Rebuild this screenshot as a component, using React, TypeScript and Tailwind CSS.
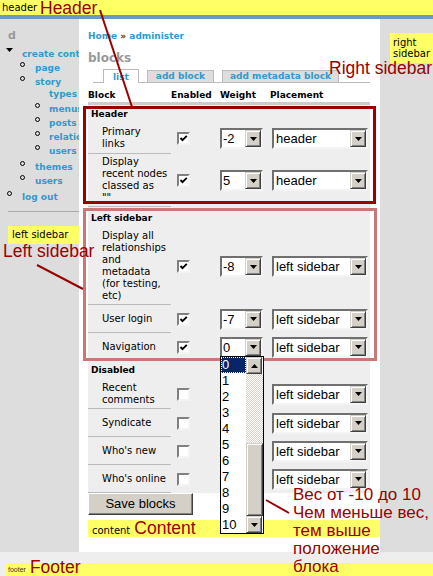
import React from 'react';

const winFont = "font-['Liberation_Sans',Arial,sans-serif]";

type Row =
    | { kind: 'section'; label: string; h: string }
    | { kind: 'block'; lines: string[]; h: string; on: boolean; weight?: string; region: string };

// disabled blocks have no weight shown: the open weight list covers that column
const rows: Row[] = [
    { kind: 'section', label: 'Header', h: 'h-[18px]' },
    { kind: 'block', lines: ['Primary', 'links'], h: 'h-[31px]', on: true, weight: '-2', region: 'header' },
    { kind: 'block', lines: ['Display', 'recent nodes', 'classed as', '""'], h: 'h-[53px]', on: true, weight: '5', region: 'header' },
    { kind: 'section', label: 'Left sidebar', h: 'h-[21px]' },
    {
        kind: 'block',
        lines: ['Display all', 'relationships', 'and', 'metadata', '(for testing,', 'etc)'],
        h: 'h-[77px]', on: true, weight: '-8', region: 'left sidebar',
    },
    { kind: 'block', lines: ['User login'], h: 'h-[28px]', on: true, weight: '-7', region: 'left sidebar' },
    { kind: 'block', lines: ['Navigation'], h: 'h-[28px]', on: true, weight: '0', region: 'left sidebar' },
    { kind: 'section', label: 'Disabled', h: 'h-[18px]' },
    { kind: 'block', lines: ['Recent', 'comments'], h: 'h-[30px]', on: false, region: 'left sidebar' },
    { kind: 'block', lines: ['Syndicate'], h: 'h-[28px]', on: false, region: 'left sidebar' },
    { kind: 'block', lines: ["Who's new"], h: 'h-[28px]', on: false, region: 'left sidebar' },
    { kind: 'block', lines: ["Who's online"], h: 'h-[28px]', on: false, region: 'left sidebar' },
];

function ArrowButton({ up = false }: { up?: boolean }) {
    return (
        <span className="w-[16px] h-[17px] shrink-0 flex items-center justify-center bg-[#d4d0c8] border border-t-[#d4d0c8] border-l-[#d4d0c8] border-r-[#404040] border-b-[#404040] shadow-[inset_1px_1px_#ffffff,inset_-1px_-1px_#808080]">
            <svg width="7" height="4" viewBox="0 0 7 4" aria-hidden="true">
                <path d={up ? 'M3.5 0L7 4H0z' : 'M0 0h7L3.5 4z'} fill="#000" />
            </svg>
        </span>
    );
}

function Select({ value, wide }: { value: string; wide?: boolean }) {
    return (
        <div
            className={`${wide ? 'w-[96px] pl-[2px]' : 'w-[43px] pl-[1px]'} h-[21px] flex bg-white border-2 border-t-[#707070] border-l-[#707070] border-b-[#f4f4f4] border-r-[#f4f4f4] ${winFont}`}
        >
            <span className="flex-1 h-[17px] overflow-hidden whitespace-nowrap text-[13px] leading-[18px] text-black">{value}</span>
            <ArrowButton />
        </div>
    );
}

function Checkbox({ on }: { on: boolean }) {
    return (
        <span className="w-[13px] h-[13px] flex items-center justify-center bg-white border-2 border-t-[#808080] border-l-[#808080] border-b-[#f4f4f4] border-r-[#f4f4f4]">
            {on && (
                <svg width="9" height="9" viewBox="0 0 9 9" aria-hidden="true">
                    <path d="M1.5 4l2 2.2L7.8 1.8" stroke="#000" strokeWidth="1.9" fill="none" />
                </svg>
            )}
        </span>
    );
}

function NavItem({ text, pad, bullet, extra = '' }: { text: string; pad: string; bullet?: string; extra?: string }) {
    return (
        <li className={`relative ${pad} ${extra}`}>
            {bullet && <span className={`absolute top-[1px] ${bullet} w-[5px] h-[5px] rounded-full border border-black`} />}
            {text}
        </li>
    );
}

function LeftSidebar() {
    return (
        <aside className="w-[79px] shrink-0 bg-[#dddddd] overflow-hidden">
            <h2 className="mt-[10px] pl-[8px] text-[11px] leading-[14px] font-bold text-[#999999]">d</h2>
            <ul className="mt-[4px] text-[9px] leading-[14px] font-bold text-[#3399cc] whitespace-nowrap">
                <li className="relative pl-[22px]">
                    <svg className="absolute left-[6px] top-[1px]" width="7" height="4" viewBox="0 0 7 4" aria-hidden="true">
                        <path d="M0 0h7L3.5 4z" fill="#000" />
                    </svg>
                    create content
                </li>
                <NavItem text="page" pad="pl-[35px]" bullet="left-[20px]" />
                <NavItem text="story" pad="pl-[35px]" bullet="left-[20px]" />
                <NavItem text="types" pad="pl-[49px]" extra="-mt-[2px]" />
                <NavItem text="menus" pad="pl-[49px]" bullet="left-[35px]" extra="mt-[1px]" />
                <NavItem text="posts" pad="pl-[49px]" bullet="left-[35px]" />
                <NavItem text="relationships" pad="pl-[49px]" bullet="left-[35px]" />
                <NavItem text="users" pad="pl-[49px]" bullet="left-[35px]" />
                <NavItem text="themes" pad="pl-[35px]" bullet="left-[20px]" extra="mt-[2px]" />
                <NavItem text="users" pad="pl-[35px]" bullet="left-[20px]" />
                <NavItem text="log out" pad="pl-[22px]" bullet="left-[7px]" extra="mt-[2px]" />
            </ul>
            <div className="mt-[7px] ml-[8px] border-t border-[#aaaaaa]" />
            <div className="mt-[14px] ml-[8px] h-[18px] bg-[#ffff66] pl-[4px] leading-[18px] text-black whitespace-nowrap">left sidebar</div>
        </aside>
    );
}

function BlocksTable() {
    return (
        <div className="w-[282px]">
            <div className="grid grid-cols-[83px_49px_52px_98px] pt-[6px] pb-[1px] text-[9px] leading-[12px] font-bold border-b-[3px] border-[#cccccc]">
                <span>Block</span>
                <span>Enabled</span>
                <span>Weight</span>
                <span className="-ml-[2px]">Placement</span>
            </div>
            <div className="bg-[#eeeeee]">
                {rows.map((row, i) =>
                    row.kind === 'section' ? (
                        <div key={i} className={`${row.h} flex items-center pl-[3px] text-[9px] leading-[12px] font-bold`}>
                            {row.label}
                        </div>
                    ) : (
                        <div key={i} className={`${row.h} grid grid-cols-[83px_49px_52px_98px] items-center`}>
                            <div className="h-full flex flex-col justify-center pl-[14px] border-b border-[#bbbbbb] leading-[12px] whitespace-nowrap">
                                {row.lines.map((l) => (
                                    <span key={l}>{l}</span>
                                ))}
                            </div>
                            <div className="pl-[6px]">
                                <Checkbox on={row.on} />
                            </div>
                            {row.weight ? <Select value={row.weight} /> : <div />}
                            <Select value={row.region} wide />
                        </div>
                    ),
                )}
            </div>
        </div>
    );
}

function Main() {
    return (
        <main className="w-[301px] shrink-0 pl-[9px] bg-white">
            <div className="mt-[11px] text-[9px] leading-[12px] font-bold whitespace-nowrap">
                <a className="text-[#3399cc]">Home</a> <span className="text-[#333333]">»</span>{' '}
                <a className="text-[#3399cc]">administer</a>
            </div>
            <h1 className="mt-[9px] text-[12px] leading-[14px] font-bold text-[#999999]">blocks</h1>
            <div className="mt-[4px] ml-[5px] mr-[10px] pl-[10px] flex items-end gap-[8px] border-b border-[#bbbbbb] text-[9px] font-bold text-[#3399cc] whitespace-nowrap">
                <span className="-mb-[1px] h-[14px] px-[9px] pt-[1px] leading-[12px] bg-white border-x border-t border-[#bbbbbb]">list</span>
                <span className="h-[12px] px-[8px] leading-[11px] bg-[#dddddd] border-x border-t border-[#bbbbbb]">add block</span>
                <span className="h-[12px] px-[7px] leading-[11px] bg-[#dddddd] border-x border-t border-[#bbbbbb]">add metadata block</span>
            </div>
            <BlocksTable />
            <button
                type="button"
                className={`w-[105px] h-[22px] bg-[#d4d0c8] border border-t-white border-l-white border-r-[#404040] border-b-[#404040] shadow-[inset_-1px_-1px_#808080] text-[13px] leading-[18px] text-black ${winFont}`}
            >
                Save blocks
            </button>
            <div className="mt-[5px] h-[17px] bg-[#ffff66] flex items-baseline gap-[4px] pl-[4px] whitespace-nowrap">
                <span className="leading-[12px]">content</span>
                <span className={`${winFont} text-[17.5px] leading-[17px] text-[#990000]`}>Content</span>
            </div>
        </main>
    );
}

function WeightList() {
    const values = ['0', '1', '2', '3', '4', '5', '6', '7', '8', '9', '10'];
    return (
        <div className={`absolute left-[220px] top-[356px] w-[44px] h-[178px] flex bg-white border border-black ${winFont}`}>
            <ul className="flex-1 text-[13px] leading-[16px] text-black">
                {values.map((v, i) => (
                    <li
                        key={v}
                        className={`h-[16px] pl-[1px] ${i === 0 ? 'bg-[#0a246a] text-white outline-1 outline-dotted outline-[#ffffaa] -outline-offset-1' : ''}`}
                    >
                        {v}
                    </li>
                ))}
            </ul>
            <div className="w-[17px] flex flex-col">
                <ArrowButton up />
                <div className="h-[69px] bg-[image:repeating-conic-gradient(#d4d0c8_0_25%,#ffffff_0_50%)] bg-[length:2px_2px]" />
                <div className="h-[74px] bg-[#d4d0c8] border border-t-[#d4d0c8] border-l-[#d4d0c8] border-r-[#404040] border-b-[#404040] shadow-[inset_1px_1px_#ffffff,inset_-1px_-1px_#808080]" />
                <ArrowButton />
            </div>
        </div>
    );
}

function Annotations() {
    const note = `${winFont} absolute text-[17.5px] leading-[20px] text-[#990000] whitespace-nowrap`;
    return (
        <>
            <div className="absolute left-[83px] top-[106px] w-[293px] h-[98px] border-[3px] border-[#990000]" />
            <div className="absolute left-[83px] top-[208px] w-[294px] h-[153px] border-[3px] border-[#cc7777]" />
            <WeightList />
            <span className={`${note} left-[40px] -top-[2px]`}>Header</span>
            <span className={`${note} left-[329px] top-[58px]`}>Right sidebar</span>
            <span className={`${note} left-[3px] top-[241px]`}>Left sidebar</span>
            <div className={`${winFont} absolute left-[293px] top-[486px] text-[17px] leading-[18px] text-[#990000] whitespace-nowrap`}>
                Вес от -10 до 10
                <br />
                Чем меньше вес,
                <br />
                тем выше
                <br />
                положение
                <br />
                блока
            </div>
            <svg className="absolute inset-0 pointer-events-none" width="433" height="576" aria-hidden="true">
                <g stroke="#990000" strokeWidth="2">
                    <line x1="100" y1="10" x2="132" y2="107" />
                    <line x1="37" y1="265" x2="83" y2="289" />
                    <line x1="266" y1="500" x2="289" y2="513" />
                </g>
            </svg>
        </>
    );
}

export default function App() {
    return (
        <div className="relative w-[433px] h-[576px] overflow-hidden bg-white font-['DejaVu_Sans',sans-serif] text-[10px] text-black">
            <div className="h-[15px] bg-[#ffff66] pl-[2px] leading-[15px]">header</div>
            <div className="h-[4px] bg-[#6699cc]" />
            <div className="flex h-[533px]">
                <LeftSidebar />
                <Main />
                <div className="flex-1 bg-[#dddddd] pt-[14px] pl-[10px]">
                    <div className="h-[30px] bg-[#ffff66] pl-[3px] pt-[4px] leading-[11px]">
                        right
                        <br />
                        sidebar
                    </div>
                </div>
            </div>
            <footer className="h-[24px] bg-[#eeeeee] pt-[11px] pl-[5px]">
                <div className="h-[13px] bg-[#ffff66] flex items-end gap-[4px] pl-[3px] whitespace-nowrap">
                    <span className={`${winFont} mb-[2px] text-[7px] leading-[8px] text-[#333333]`}>footer</span>
                    <span className={`${winFont} text-[17.5px] leading-[17px] text-[#990000]`}>Footer</span>
                </div>
            </footer>
            <Annotations />
        </div>
    );
}
